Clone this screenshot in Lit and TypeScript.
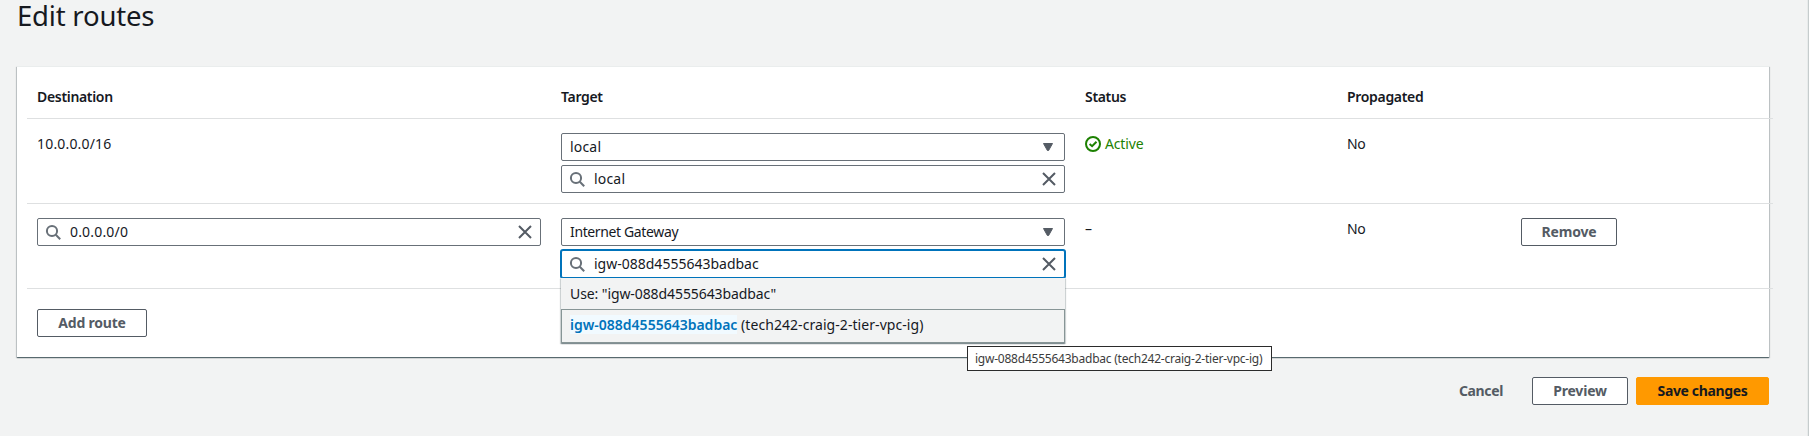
import { LitElement, html, css, svg, nothing } from "lit";
import { customElement } from "lit/decorators.js";

const icon = (name: string, body: unknown) =>
  html`<svg class="icon ${name}" viewBox="0 0 16 16" aria-hidden="true">${body}</svg>`;

const search = icon("search", svg`<circle cx="7" cy="7" r="5.1"></circle><path d="M10.8 10.8 15.2 15.2"></path>`);
const close = icon("close", svg`<path d="M2 2 14 14M14 2 2 14"></path>`);
const caret = icon("caret", svg`<path d="M3.5 4.5h9L8.6 11.5H7.4z"></path>`);
const check = icon("check", svg`<circle cx="8" cy="8" r="7"></circle><path d="M4.6 8 7.1 10.2 11.5 5.8"></path>`);

@customElement("app-root")
export class AppRoot extends LitElement {
  static styles = css`
    :host {
      display: block;
      height: 436px;
      background: #fff;
      color: #16191f;
      font: 14px/21px "Noto Sans", "Open Sans", sans-serif;
      overflow: hidden;
    }
    * { box-sizing: border-box; }
    .page {
      width: 1809px;
      height: 436px;
      padding: 0 39px 0 17px;
      background: #f2f3f3;
      border-right: 1px solid #c6cccd;
      box-shadow: inset -1px 0 0 #e8ebeb;
    }
    h1 {
      margin: 0;
      height: 66px;
      font-size: 27.5px;
      line-height: 31px;
      font-weight: 400;
      letter-spacing: -0.2px;
    }
    .card {
      height: 291px;
      background: #fff;
      border-top: 1px solid #eaeded;
      box-shadow: 0 1px 1px 0 rgba(0, 28, 36, 0.5), 1px 1px 1px 0 rgba(0, 28, 36, 0.15),
        -1px 1px 1px 0 rgba(0, 28, 36, 0.15);
    }
    .row {
      display: grid;
      grid-template-columns: 524px 524px 262px 174px 262px;
      width: 1746px;
      margin-left: 10px;
      border-bottom: 1px solid #dee0e1;
      padding: 14px 0 10px;
    }
    .row > div { padding: 0 10px; }
    .head { padding: 19px 0 11px; font-weight: 600; letter-spacing: -0.32px; }
    .wide { letter-spacing: 0.18px; }
    .tight { letter-spacing: -0.37px; }
    .stack { display: flex; flex-direction: column; gap: 4px; }
    .field {
      display: flex;
      align-items: center;
      height: 28px;
      padding: 0 7px;
      background: #fff;
      border: 1px solid #687078;
      border-radius: 2px;
      line-height: 23px;
    }
    .field span { flex: 1; padding-bottom: 2px; }
    .field .search + span { padding-left: 9px; }
    .select { padding: 0 8px; }
    .focus { border-color: #0073bb; box-shadow: 0 0 0 1px #0073bb; }
    .combo { position: relative; }
    .icon { width: 16px; height: 16px; flex: none; display: block; fill: none; stroke-width: 2; }
    .search { stroke: #687078; }
    .close { stroke: #545b64; }
    .caret { fill: #545b64; stroke: #545b64; stroke-width: 1; stroke-linejoin: round; }
    .check { stroke: #1d8102; }
    .status { display: flex; gap: 4px; color: #1d8102; letter-spacing: -0.15px; }
    .status .icon { margin-top: 3px; }
    .menu {
      position: absolute;
      z-index: 1;
      top: 28px;
      left: 0;
      right: 0;
      background: #f2f3f3;
      box-shadow: 0 1px 1px 0 rgba(0, 28, 36, 0.3), 1px 1px 1px 0 rgba(0, 28, 36, 0.15),
        -1px 1px 1px 0 rgba(0, 28, 36, 0.15);
    }
    .option { height: 31px; padding: 5px 9px 0; letter-spacing: -0.09px; }
    .option.active { height: 34px; padding: 4px 8px 0; border: 1px solid #879596; letter-spacing: 0.06px; }
    mark { background: #f1faff; color: #0073bb; font-weight: 600; letter-spacing: 0; }
    .tip {
      position: absolute;
      z-index: 2;
      left: 406px;
      top: 96px;
      width: 305px;
      height: 25px;
      padding: 0 7px;
      background: #fff;
      border: 1px solid #2b2b2b;
      color: #3c3c3c;
      font-size: 12px;
      line-height: 23px;
      letter-spacing: -0.23px;
      white-space: nowrap;
    }
    button {
      height: 28px;
      width: 96px;
      padding: 0 0 2px;
      font: 700 14px/23px "Noto Sans", "Open Sans", sans-serif;
      letter-spacing: -0.2px;
      color: #545b64;
      background: #fff;
      border: 1px solid #545b64;
      border-radius: 2px;
    }
    .add { width: 110px; margin: 20px 0 0 20px; }
    .actions { display: flex; justify-content: flex-end; gap: 8px; padding-top: 20px; }
    .link { background: none; border-color: transparent; width: 86px; letter-spacing: -0.35px; }
    .primary { width: 133px; background: #ff9900; border-color: #ff9900; color: #16191f; letter-spacing: -0.35px; }
  `;

  private select(label: string, cls = "") {
    return html`<div class="field select"><span class=${cls}>${label}</span>${caret}</div>`;
  }

  private input(label: string, cls = "", focused = false) {
    return html`<div class="field ${focused ? "focus" : ""}">${search}<span class=${cls}>${label}</span>${close}</div>`;
  }

  private menu(id: string, name: string) {
    return html`
      <div class="menu">
        <div class="option">Use: "${id}"</div>
        <div class="option active"><mark>${id}</mark> (${name})</div>
      </div>
      <div class="tip">${id} (${name})</div>
    `;
  }

  private row(dest: unknown, target: unknown, status: unknown, action: unknown = nothing) {
    return html`<div class="row">
      <div>${dest}</div>
      <div class="stack">${target}</div>
      <div>${status}</div>
      <div class="tight">No</div>
      <div>${action}</div>
    </div>`;
  }

  render() {
    const id = "igw-088d4555643badbac";
    return html`<div class="page">
      <h1>Edit routes</h1>
      <div class="card">
        <div class="row head">
          <div>Destination</div>
          <div>Target</div>
          <div>Status</div>
          <div>Propagated</div>
        </div>
        ${this.row(
          html`<span class="wide">10.0.0.0/16</span>`,
          html`${this.select("local", "wide")}${this.input("local", "wide")}`,
          html`<div class="status">${check}<span>Active</span></div>`
        )}
        ${this.row(
          this.input("0.0.0.0/0", "wide"),
          html`${this.select("Internet Gateway", "tight")}
            <div class="combo">${this.input(id, "", true)}${this.menu(id, "tech242-craig-2-tier-vpc-ig")}</div>`,
          "–",
          html`<button>Remove</button>`
        )}
        <button class="add">Add route</button>
      </div>
      <div class="actions">
        <button class="link">Cancel</button>
        <button>Preview</button>
        <button class="primary">Save changes</button>
      </div>
    </div>`;
  }
}
